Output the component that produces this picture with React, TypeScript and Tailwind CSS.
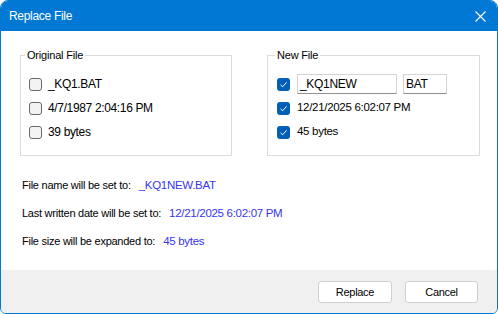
import React from "react";

const font = "font-['Liberation_Sans',Arial,sans-serif]";

function Check({ checked }: { checked?: boolean }) {
  if (checked) {
    return (
      <span className="flex h-[13px] w-[13px] shrink-0 items-center justify-center rounded-[3px] bg-[#005fb8]">
        <svg width="9" height="9" viewBox="0 0 9 9" fill="none">
          <path d="M1.5 4.8 L3.6 6.8 L7.6 2.3" stroke="#fff" strokeWidth="1" />
        </svg>
      </span>
    );
  }
  return (
    <span className="h-[13px] w-[13px] shrink-0 rounded-[3px] border border-[#6b6b6b] bg-[#f3f3f3]" />
  );
}

function Field({ value, width }: { value: string; width: string }) {
  return (
    <div
      className={`flex h-[20px] items-center border border-[#d4d4d4] border-b-[#8f8f8f] bg-white pl-[2px] text-[12px] tracking-[-0.3px] ${width}`}
    >
      {value}
    </div>
  );
}

function Group({
  title,
  children,
  className,
  legendOffset,
}: {
  title: string;
  children: React.ReactNode;
  className?: string;
  legendOffset: string;
}) {
  return (
    <fieldset className={`h-[108px] border border-[#dcdcdc] ${className ?? ""}`}>
      <legend
        className={`px-[2px] text-[11px] leading-[14px] tracking-[-0.2px] ${legendOffset}`}
      >
        {title}
      </legend>
      {children}
    </fieldset>
  );
}

export default function App() {
  return (
    <div className={`h-[314px] w-[498px] bg-white ${font} text-black`}>
      <div className="flex h-full w-full flex-col overflow-hidden rounded-t-[8px] rounded-b-[6px] border border-[#0078d4]">
        {/* Title bar */}
        <div className="flex h-[30px] shrink-0 items-center justify-between bg-[#0078d4] pl-[8px] pr-[10px] text-white">
          <span className="text-[12px] tracking-[-0.3px]">Replace File</span>
          <svg width="11" height="11" viewBox="0 0 11 11" className="mr-[1px]">
            <path d="M0.5 0.5 L10.5 10.5 M10.5 0.5 L0.5 10.5" stroke="#fff" strokeWidth="1.1" />
          </svg>
        </div>

        {/* Body */}
        <div className="flex flex-1 flex-col bg-white pl-[19px] pt-[17px]">
          <div className="flex gap-[35px]">
            <Group title="Original File" className="w-[212px]" legendOffset="ml-[4px]">
              <div className="flex flex-col pl-[8px] pt-[10px] text-[12px] tracking-[-0.35px]">
                <div className="flex h-[24px] items-center gap-[6px]">
                  <Check />
                  <span>_KQ1.BAT</span>
                </div>
                <div className="flex h-[24px] items-center gap-[6px]">
                  <Check />
                  <span>4/7/1987 2:04:16 PM</span>
                </div>
                <div className="flex h-[24px] items-center gap-[6px]">
                  <Check />
                  <span>39 bytes</span>
                </div>
              </div>
            </Group>
            <Group title="New File" className="w-[213px]" legendOffset="ml-[7px]">
              <div className="flex flex-col pl-[9px] pt-[10px] text-[11.5px] tracking-[-0.3px]">
                <div className="flex h-[24px] items-center gap-[7px]">
                  <Check checked />
                  <div className="flex gap-[6px]">
                    <Field value="_KQ1NEW" width="w-[100px]" />
                    <Field value="BAT" width="w-[44px]" />
                  </div>
                </div>
                <div className="flex h-[24px] items-center gap-[7px]">
                  <Check checked />
                  <span>12/21/2025 6:02:07 PM</span>
                </div>
                <div className="flex h-[24px] items-center gap-[7px]">
                  <Check checked />
                  <span>45 bytes</span>
                </div>
              </div>
            </Group>
          </div>

          <div className="mt-[22px] flex flex-col gap-[14px] pl-[2px] text-[11px] leading-[14px] tracking-[-0.25px]">
            <div className="flex gap-[8px]">
              <span>File name will be set to:</span>
              <span className="text-[11.5px] tracking-[-0.3px] text-[#3535f0]">_KQ1NEW.BAT</span>
            </div>
            <div className="flex gap-[8px]">
              <span>Last written date will be set to:</span>
              <span className="text-[11.5px] tracking-[-0.3px] text-[#3535f0]">
                12/21/2025 6:02:07 PM
              </span>
            </div>
            <div className="flex gap-[8px]">
              <span>File size will be expanded to:</span>
              <span className="text-[11.5px] tracking-[-0.3px] text-[#3535f0]">45 bytes</span>
            </div>
          </div>
        </div>

        {/* Footer */}
        <div className="flex h-[43px] shrink-0 items-start justify-end gap-[13px] bg-[#f0f0f0] pr-[19px] pt-[11px] text-[11px] tracking-[-0.3px]">
          <button className="h-[22px] w-[74px] rounded-[3px] border border-[#d0d0d0] bg-white">
            Replace
          </button>
          <button className="h-[22px] w-[73px] rounded-[3px] border border-[#d0d0d0] bg-white">
            Cancel
          </button>
        </div>
      </div>
    </div>
  );
}
